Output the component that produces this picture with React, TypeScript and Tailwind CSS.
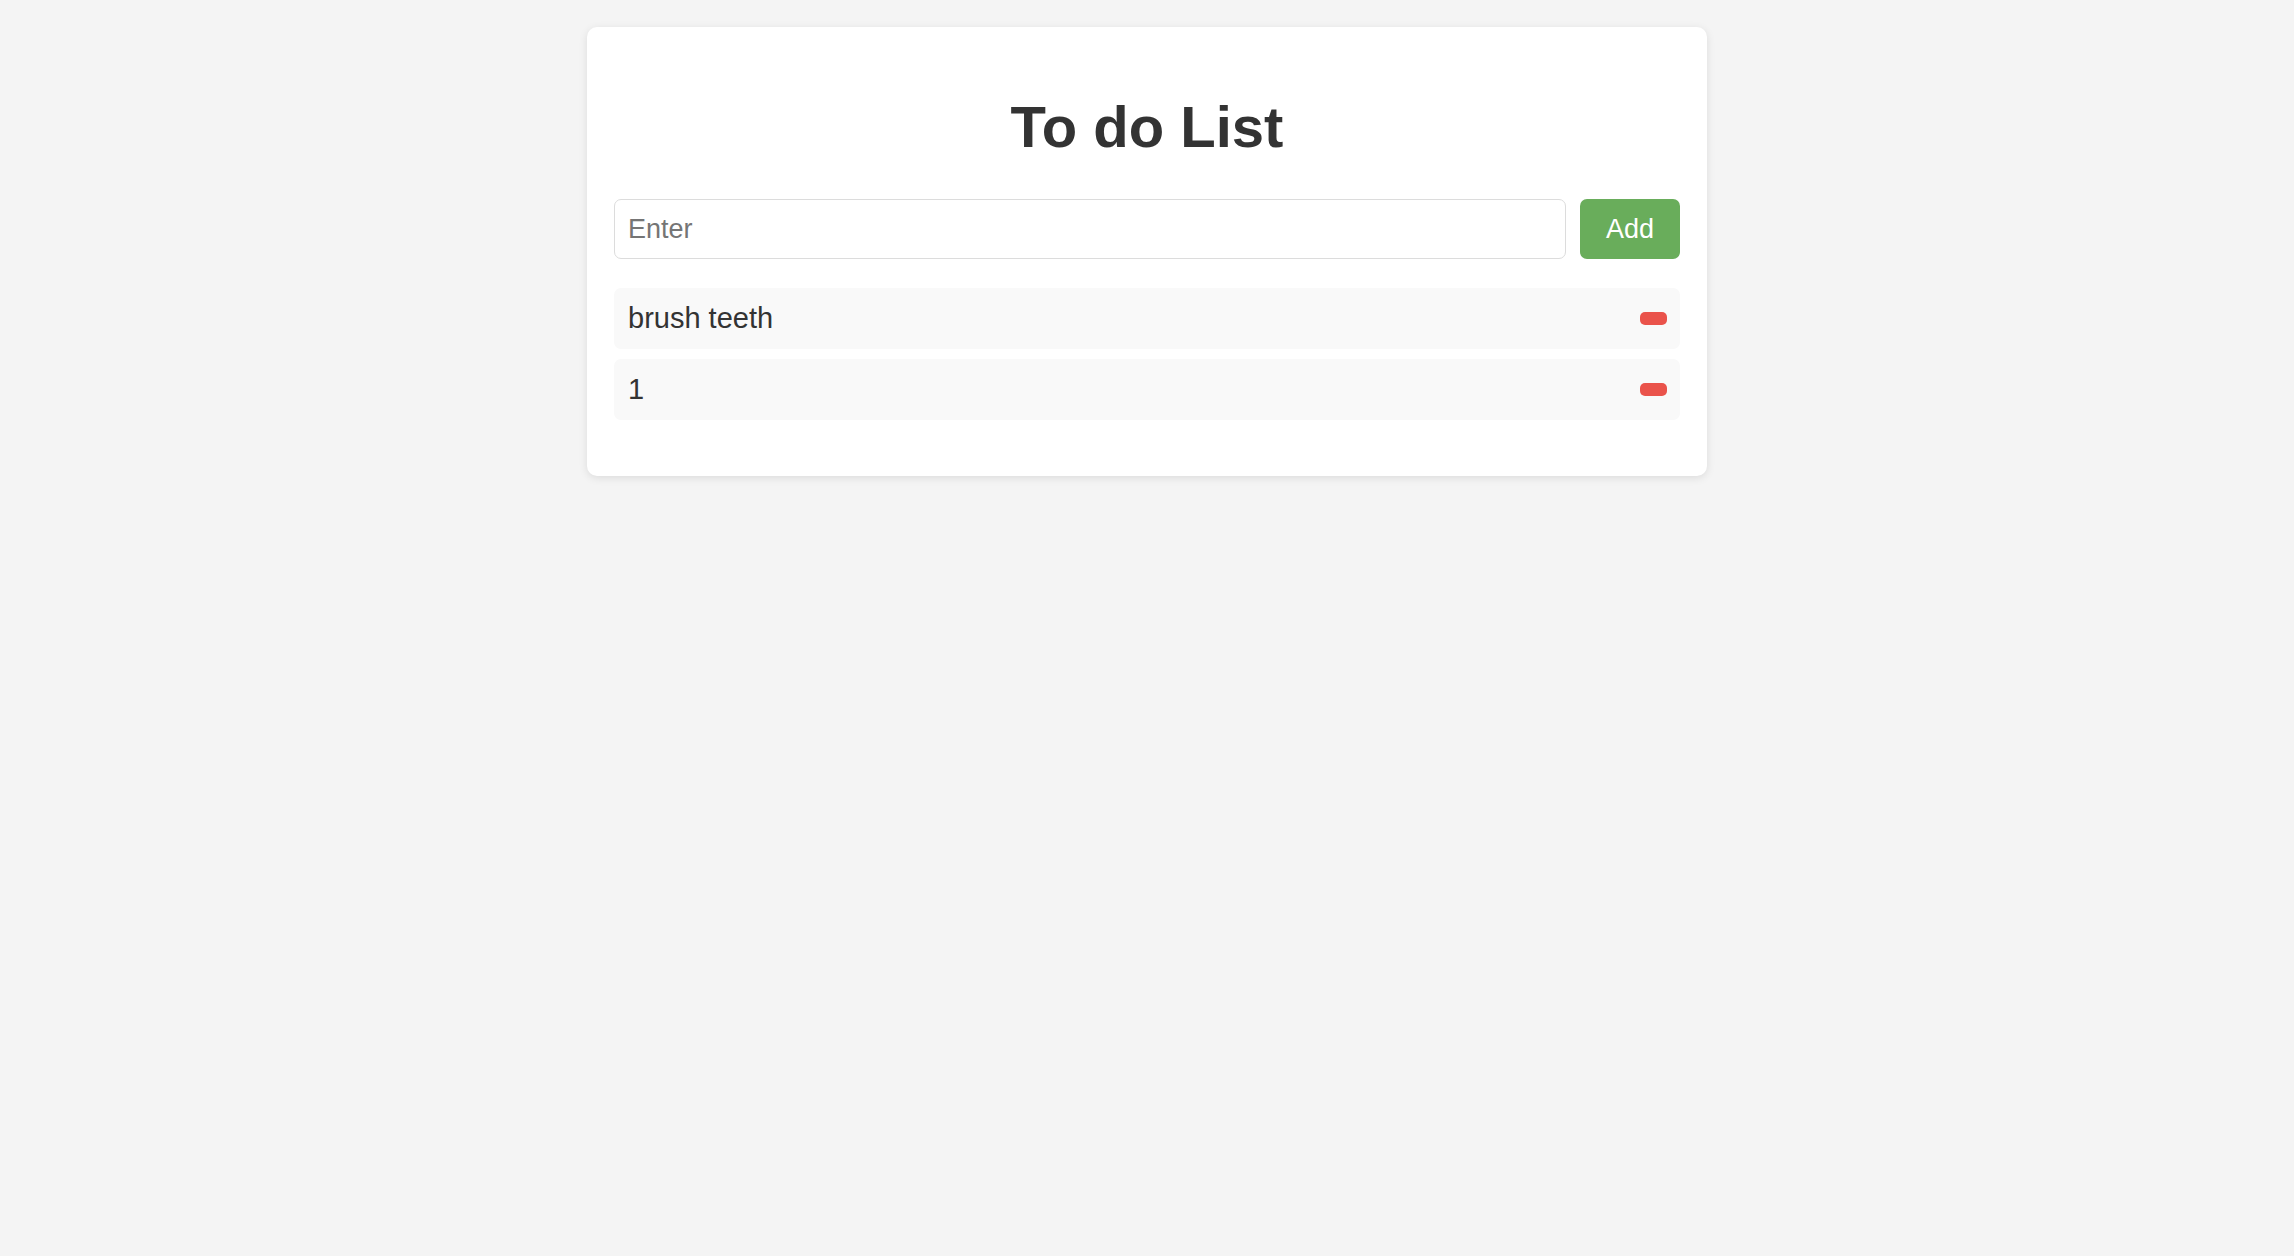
import React, { useState } from 'react';

type Todo = { id: number; text: string };

const App: React.FC = () => {
    const [todos, setTodos] = useState<Todo[]>([
        { id: 1, text: "brush teeth" },
        { id: 2, text: "1" },
    ]);
    const [value, setValue] = useState("");

    const addTodo = () => {
        if (!value.trim()) return;
        setTodos([...todos, { id: Date.now(), text: value.trim() }]);
        setValue("");
    };

    const removeTodo = (id: number) => setTodos(todos.filter(t => t.id !== id));

    return (
        <div className="min-h-screen w-full bg-[#f4f4f4] pt-[27px] font-['Liberation_Sans',Arial,sans-serif] text-[#333]">
            <div className="mx-auto w-[1120px] rounded-[10px] bg-white px-[27px] pt-[27px] pb-[27px] shadow-[0_2px_8px_rgba(0,0,0,0.1)]">
                <h1 className="mt-[40px] mb-[40px] text-center text-[58px] leading-[65px] font-bold text-[#333]">
                    To do List
                </h1>

                {/* Input row */}
                <div className="flex gap-[14px]">
                    <input
                        value={value}
                        onChange={e => setValue(e.target.value)}
                        onKeyDown={e => e.key === 'Enter' && addTodo()}
                        placeholder="Enter"
                        className="h-[60px] flex-1 rounded-[7px] border-[1.8px] border-[#dcdcdc] px-[13px] text-[27px] text-[#333] outline-none placeholder:text-[#757575]"
                    />
                    <button
                        onClick={addTodo}
                        className="h-[60px] w-[100px] rounded-[7px] bg-[#69ad5b] text-[27px] text-white"
                    >
                        Add
                    </button>
                </div>

                {/* List */}
                <ul className="mt-[29px] mb-[29px] flex flex-col gap-[10px]">
                    {todos.map(todo => (
                        <li
                            key={todo.id}
                            className="flex h-[61px] items-center justify-between rounded-[7px] bg-[#f9f9f9] pl-[14px] pr-[13px] text-[29px]"
                        >
                            <span>{todo.text}</span>
                            <button
                                onClick={() => removeTodo(todo.id)}
                                className="h-[13px] w-[27px] rounded-[5px] bg-[#ea534b]"
                            />
                        </li>
                    ))}
                </ul>
            </div>
        </div>
    );
};

export default App;
